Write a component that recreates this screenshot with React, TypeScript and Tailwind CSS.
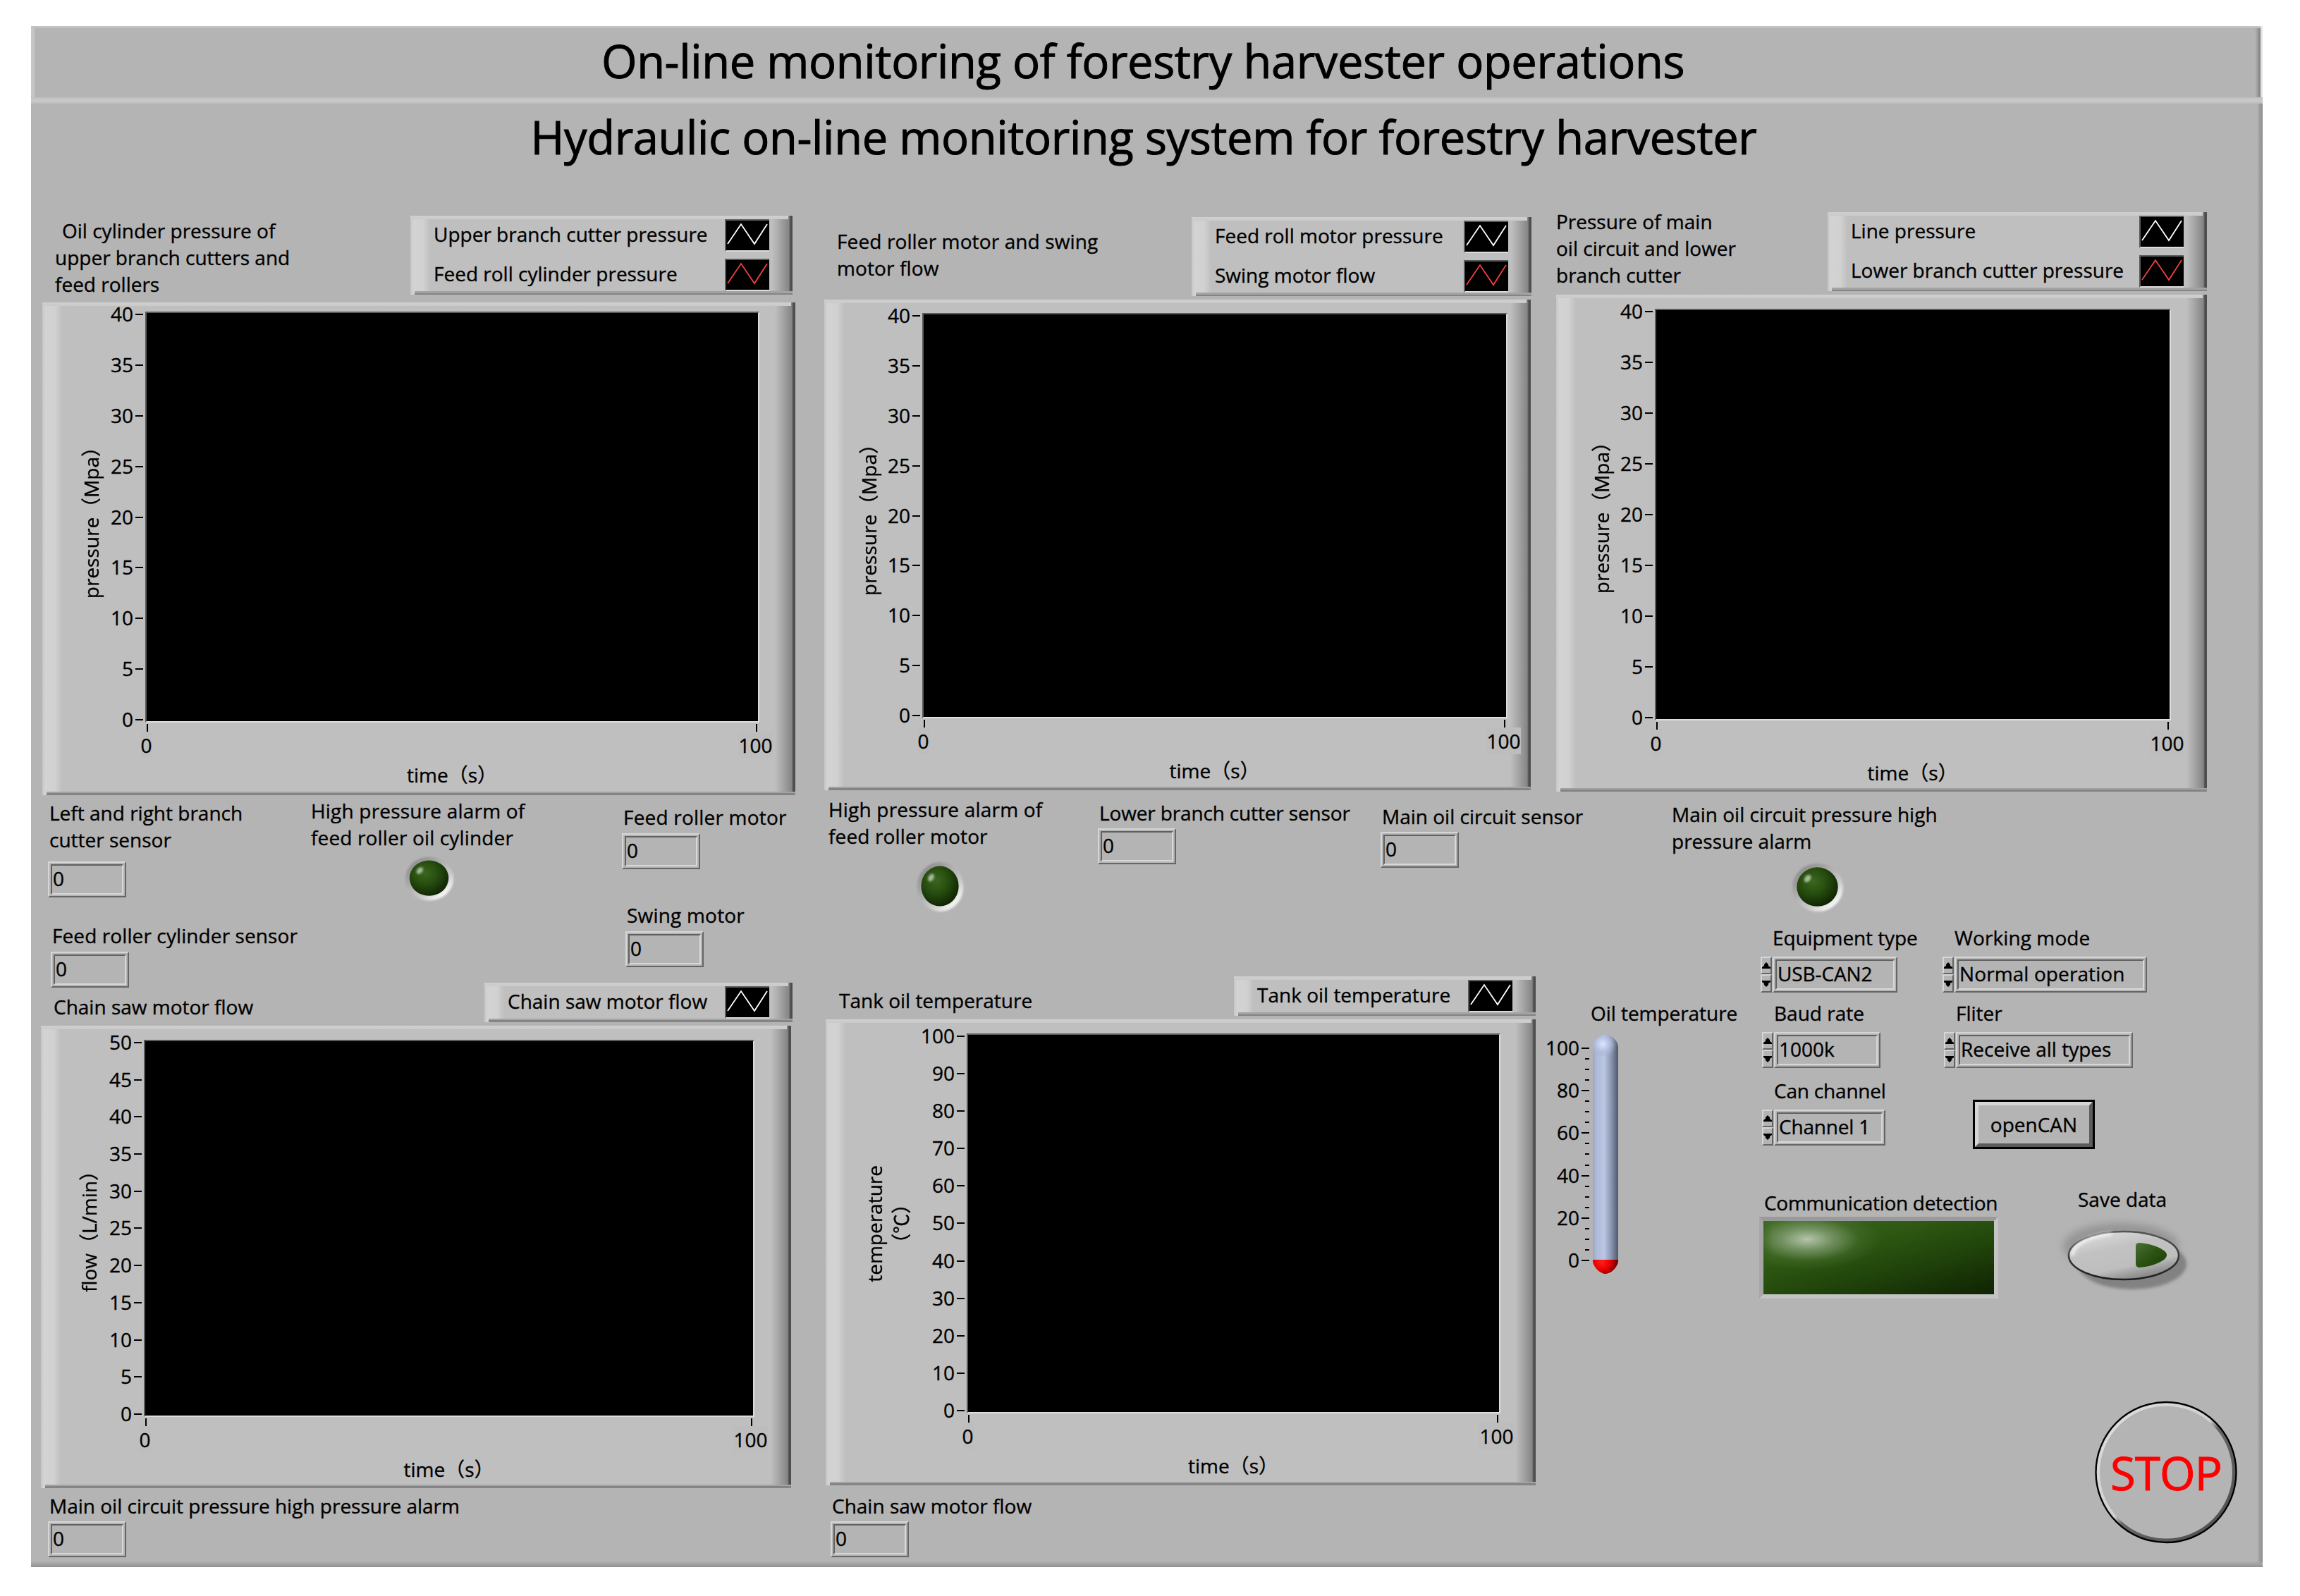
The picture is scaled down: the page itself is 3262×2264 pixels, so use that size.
import React from "react";

const BEVEL =
  "[background:linear-gradient(#d0d0d0,#cacaca)_0_0/calc(100%_-_6px)_5px_no-repeat,linear-gradient(#a3a3a3_50%,#848484_50%)_100%_100%/calc(100%_-_6px)_5px_no-repeat,linear-gradient(90deg,#c6c6c6_0px,#d3d3d3_4px,#d1d1d1_18px,#bfbfbf_28px,#bfbfbf_calc(100%_-_29px),#a6a6a6_calc(100%_-_18px),#858585_calc(100%_-_5px),#4e4e4e_calc(100%_-_3px),#4e4e4e_100%)]";

function Label({ children, className = "" }: { children: React.ReactNode; className?: string }) {
  return <div className={className}><span className="pl-[2px]">{children}</span></div>;
}

function Wave({ color }: { color: string }) {
  return (
    <div className="h-[46px] w-[63px] shrink-0 border-t-2 border-r-0 border-b-2 border-l-2 border-t-[#5a5a5a] border-b-[#dcdcdc] border-l-[#5a5a5a] bg-black">
      <svg width="61" height="42" viewBox="2 2 61 42" fill="none">
        <path d="M4 35 L23 7 L42 35 L60 7" stroke={color} strokeWidth="1.800" />
      </svg>
    </div>
  );
}

function Legend({ items, className }: { items: string[]; className: string }) {
  return (
    <div className={`${BEVEL} flex shrink-0 flex-col gap-[10px] pt-[5px] pr-[33px] pl-[33px] ${className}`}>
      {items.map((t, i) => (
        <div key={t} className="flex h-[46px] justify-between pt-0">
          <span className="pt-[2px]">{t}</span>
          <Wave color={i === 0 ? "#ffffff" : "#f04040"} />
        </div>
      ))}
    </div>
  );
}

type ChartProps = {
  frame: string;
  axis: string;
  label: string;
  plot: string;
  base: string;
  ticks: number[];
  lines: string[];
};

function Chart({ frame, axis, label, plot, base, ticks, lines }: ChartProps) {
  return (
    <div className={`${BEVEL} shrink-0 ${frame}`}>
      <div className="flex">
        <div className={`flex shrink-0 ${axis}`}>
          <div className={`flex shrink-0 items-center ${label}`}>
            <div className="rotate-180 text-center [text-orientation:sideways] [writing-mode:vertical-rl]">
              {lines.map((l) => (
                <div key={l}>{l}</div>
              ))}
            </div>
          </div>
          <div className="flex flex-1 flex-col justify-between pt-[3px] pr-[3px] pb-[3px]">
            {ticks.map((t) => (
              <div key={t} className="flex h-[2px] items-center justify-end gap-[3px]">
                <span className="pb-[2px]">{t}</span>
                <div className="h-[2px] w-[11px] shrink-0 bg-black" />
              </div>
            ))}
          </div>
        </div>
        <div
          className={`shrink-0 border-2 border-t-[#5a5a5a] border-r-[#dcdcdc] border-b-[#dedede] border-l-[#5a5a5a] bg-black ${plot}`}
        />
      </div>
      <div className={base}>
        <div className="flex justify-between pt-[2px]">
          {["0", "100"].map((t) => (
            <div key={t} className="flex w-[2px] flex-col items-center">
              <div className="h-[11px] w-[2px] shrink-0 bg-black" />
              <span className="-ml-[3px] bg-[#bdbdbd]">{t}</span>
            </div>
          ))}
        </div>
        <div className="mt-[4px] text-center">time（s）</div>
      </div>
    </div>
  );
}

function Sunken({ children, className }: { children: React.ReactNode; className: string }) {
  return (
    <div
      className={`h-[51px] border-2 border-t-[#d6d6d6] border-r-[#666] border-b-[#666] border-l-[#d6d6d6] p-[2px] ${className}`}
    >
      <div className="flex h-full items-center border-2 border-t-[#606060] border-r-[#d8d8d8] border-b-[#d8d8d8] border-l-[#606060] pb-[3px] pl-px">
        {children}
      </div>
    </div>
  );
}

function Spinner() {
  const key =
    "flex w-[16px] items-center justify-center border-2 border-t-[#d6d6d6] border-r-[#666] border-b-[#666] border-l-[#d6d6d6]";
  return (
    <div className="flex h-[51px] w-[16px] flex-col justify-between">
      <div className={`${key} h-[25px]`}>
        <svg width="12" height="10" viewBox="0 0 12 10" className="shrink-0">
          <path d="M6 0 L9 3 V5 L12 7 V9 H0 V7 L3 5 V3 Z" fill="#000" />
        </svg>
      </div>
      <div className={`${key} h-[26px]`}>
        <svg width="12" height="10" viewBox="0 0 12 10" className="shrink-0">
          <path d="M6 10 L9 7 V5 L12 3 V1 H0 V3 L3 5 V7 Z" fill="#000" />
        </svg>
      </div>
    </div>
  );
}

function Field({ label, value, width, className }: { label: string; value: string; width: string; className: string }) {
  return (
    <div className={className}>
      <div className="pl-[17px]">{label}</div>
      <div className="mt-[8px] flex gap-px">
        <Spinner />
        <Sunken className={width}>{value}</Sunken>
      </div>
    </div>
  );
}

function Led({ id, className }: { id: string; className: string }) {
  return (
    <svg viewBox="0 0 76 76" preserveAspectRatio="none" className={className}>
      <defs>
        <linearGradient id={`${id}r`} x1="0.15" y1="0.1" x2="0.85" y2="0.9">
          <stop offset="0" stopColor="#8c8c8c" />
          <stop offset="0.4" stopColor="#b0b0b0" />
          <stop offset="0.7" stopColor="#cccccc" />
          <stop offset="1" stopColor="#ffffff" />
        </linearGradient>
        <radialGradient id={`${id}b`} cx="0.4" cy="0.36" r="0.65">
          <stop offset="0" stopColor="#3a661f" />
          <stop offset="0.45" stopColor="#295010" />
          <stop offset="1" stopColor="#102603" />
        </radialGradient>
        <filter id={`${id}f`} x="-50%" y="-50%" width="200%" height="200%">
          <feGaussianBlur stdDeviation="1.6" />
        </filter>
      </defs>
      <circle cx="38" cy="38" r="35" fill={`url(#${id}r)`} filter={`url(#${id}f)`} />
      <circle cx="37.500" cy="37" r="28.500" fill={`url(#${id}b)`} />
      <ellipse cx="24" cy="25" rx="4" ry="6" fill="#cfdcc8" opacity="0.75" filter={`url(#${id}f)`} transform="rotate(35 24 25)" />
    </svg>
  );
}

function Thermometer() {
  const marks = Array.from({ length: 21 }, (_, i) => 100 - i * 5);
  return (
    <div className="mt-[12px] flex">
      <div className="mt-[18px] flex h-[303px] w-[64px] flex-col justify-between">
        {marks.map((m) => (
          <div key={m} className="flex h-[2px] items-center justify-end gap-[3px]">
            {m % 20 === 0 ? (
              <>
                <span className="pb-[2px]">{m}</span>
                <div className="h-[2px] w-[11px] shrink-0 bg-black" />
              </>
            ) : (
              <div className="h-[2px] w-[6px] shrink-0 bg-black" />
            )}
          </div>
        ))}
      </div>
      <svg width="36" height="339" viewBox="0 0 36 339" className="ml-[5px]">
        <defs>
          <linearGradient id="tube" x1="0" x2="1" y1="0" y2="0">
            <stop offset="0" stopColor="#9aa6c2" />
            <stop offset="0.15" stopColor="#aebbdb" />
            <stop offset="0.45" stopColor="#bac6e2" />
            <stop offset="0.7" stopColor="#8f9ab5" />
            <stop offset="1" stopColor="#4f586c" />
          </linearGradient>
          <radialGradient id="cap" gradientUnits="userSpaceOnUse" cx="14" cy="13" r="20">
            <stop offset="0" stopColor="#dce6ff" />
            <stop offset="0.5" stopColor="#b4c1e2" stopOpacity="0.9" />
            <stop offset="1" stopColor="#a0acc8" stopOpacity="0" />
          </radialGradient>
          <radialGradient id="bulb" gradientUnits="userSpaceOnUse" cx="13" cy="322" r="24">
            <stop offset="0" stopColor="#ff2020" />
            <stop offset="0.45" stopColor="#ee0000" />
            <stop offset="1" stopColor="#5a0000" />
          </radialGradient>
        </defs>
        <path d="M0 18 C0 8 10 0 18 0 C26 0 36 8 36 18 V319 H0 Z" fill="url(#tube)" />
        <path d="M0 18 C0 8 10 0 18 0 C26 0 36 8 36 18 V30 H0 Z" fill="url(#cap)" />
        <path d="M0 319 H36 V322 C34 331 25 339 18 339 C11 339 2 331 0 322 Z" fill="url(#bulb)" />
      </svg>
    </div>
  );
}

function SaveButton() {
  return (
    <svg width="210" height="120" viewBox="2905 1720 210 120" className="mt-0">
      <defs>
        <filter id="soft" x="-30%" y="-30%" width="160%" height="160%">
          <feGaussianBlur stdDeviation="6" />
        </filter>
        <filter id="soft2" x="-30%" y="-30%" width="160%" height="160%">
          <feGaussianBlur stdDeviation="2" />
        </filter>
        <linearGradient id="face" x1="0.1" y1="0" x2="0.6" y2="1">
          <stop offset="0" stopColor="#e0e0e0" />
          <stop offset="0.4" stopColor="#c2c2c2" />
          <stop offset="0.75" stopColor="#bebebe" />
          <stop offset="1" stopColor="#858585" />
        </linearGradient>
        <linearGradient id="rim" x1="0" y1="0" x2="0" y2="1">
          <stop offset="0" stopColor="#555" />
          <stop offset="1" stopColor="#1c1c1c" />
        </linearGradient>
        <linearGradient id="dee" x1="0" y1="0" x2="1" y2="1">
          <stop offset="0" stopColor="#4a7034" />
          <stop offset="0.5" stopColor="#2c5312" />
          <stop offset="1" stopColor="#1a3a06" />
        </linearGradient>
      </defs>
      <ellipse cx="3008" cy="1768" rx="82" ry="33" fill="#949494" filter="url(#soft)" />
      <ellipse cx="3024" cy="1793" rx="77" ry="36" fill="#828282" filter="url(#soft2)" />
      <ellipse cx="3012" cy="1781" rx="78" ry="34" fill="url(#face)" stroke="url(#rim)" strokeWidth="2.500" />
      <path d="M2939 1781 C2940 1764 2965 1753 2995 1750" stroke="#fff" strokeWidth="5" fill="none" opacity="0.7" filter="url(#soft2)" />
      <path d="M3029 1767 Q3029 1763 3035 1763 Q3056 1765 3069 1774 Q3077 1780 3069 1787 Q3056 1796 3035 1798 Q3029 1798 3029 1793 Z" fill="url(#dee)" />
    </svg>
  );
}

function StopButton() {
  return (
    <div className="mt-[147px] ml-[476px] grid h-[203px] w-[202px] place-items-center *:[grid-area:1/1]">
      <svg width="202" height="203" viewBox="0 0 202 203" fill="none">
        <defs>
          <linearGradient id="bevel" x1="0.15" y1="0.15" x2="0.85" y2="0.85">
            <stop offset="0" stopColor="#dadada" />
            <stop offset="0.46" stopColor="#cfcfcf" />
            <stop offset="0.54" stopColor="#666666" />
            <stop offset="1" stopColor="#545454" />
          </linearGradient>
        </defs>
        <circle cx="101" cy="101.500" r="96.500" stroke="url(#bevel)" strokeWidth="5" />
        <circle cx="101" cy="101.500" r="99.500" stroke="#000" strokeWidth="2.400" />
      </svg>
      <span className="text-[65px] leading-[88px] tracking-[-0.8px] text-[#ff0000] [-webkit-text-stroke:1px_#ff0000]">STOP</span>
    </div>
  );
}

const T40 = [40, 35, 30, 25, 20, 15, 10, 5, 0];
const T50 = [50, 45, 40, 35, 30, 25, 20, 15, 10, 5, 0];
const T100 = [100, 90, 80, 70, 60, 50, 40, 30, 20, 10, 0];

export default function App() {
  return (
    <div className="h-[2264px] w-[3262px] overflow-hidden bg-white pt-[37px] pl-[44px] text-[28px] leading-[38px] whitespace-nowrap text-black [-webkit-text-stroke:0.35px_#000] [font-family:'Open_Sans','Noto_Sans_CJK_SC',sans-serif]">
      <header className="flex h-[101px] w-[3165px]">
        <div className="h-full w-[3162px] border-t-[3px] border-t-[#c2c2c2] [background:linear-gradient(90deg,#c6c6c6_0px,#c6c6c6_4px,#b4b4b4_6px,#b4b4b4_calc(100%_-_8px),#9c9c9c_calc(100%_-_4px),#7c7c7c_100%)]">
          <h1 className="pt-[2px] pr-[8px] text-center text-[65px] leading-[88px] tracking-[-0.38px] [-webkit-text-stroke:1px_#000]">
            On-line monitoring of forestry harvester operations
          </h1>
        </div>
        <div className="h-full w-[3px] bg-[#e4e4e4]" />
      </header>
      <div className="h-[9px] w-[3165px] [background:linear-gradient(#bdbdbd,#c9c9c9_40%,#c6c6c6_70%,#bbbbbb)]" />
      <main className="h-[2076px] w-[3165px] [background:linear-gradient(transparent_calc(100%_-_9px),#a6a6a6_calc(100%_-_5px),#909090_100%),linear-gradient(90deg,#b4b4b4_calc(100%_-_8px),#a2a2a2_calc(100%_-_5px),#8a8a8a_100%)]">
        <h2 className="h-[143px] pt-[3px] pr-[9px] text-center text-[65px] leading-[88px] tracking-[-0.38px] [-webkit-text-stroke:1px_#000]">
          Hydraulic on-line monitoring system for forestry harvester
        </h2>
        <div className="flex">
          {/* Cylinder pressure and chain saw flow */}
          <section className="flex w-[1106px] shrink-0 flex-col items-start">
            <div className="flex h-[139px]">
              <div className="mt-[18px] ml-[34px] w-[504px]">
                <div className="pl-[10px]">Oil cylinder pressure of</div>
                <div>upper branch cutters and</div>
                <div>feed rollers</div>
              </div>
              <Legend className="mt-[16px] h-[112px] w-[542px]" items={["Upper branch cutter pressure", "Feed roll cylinder pressure"]} />
            </div>
            <Chart
              frame="ml-[16px] h-[699px] w-[1068px] pt-[13px]"
              axis="w-[146px]"
              label="ml-[50px] w-[38px] pt-[2px]"
              plot="h-[583px] w-[871px]"
              base="ml-[148px] w-[866px]"
              ticks={T40}
              lines={["pressure（Mpa）"]}
            />
            <div className="flex h-[327px]">
              <div className="mt-[6px] ml-[24px] w-[371px]">
                <Label>Left and right branch</Label>
                <Label>cutter sensor</Label>
                <Sunken className="mt-[12px] w-[111px]">0</Sunken>
                <Label className="mt-[35px] ml-[4px] tracking-[0.1px]">Feed roller cylinder sensor</Label>
                <Sunken className="mt-[4px] ml-[4px] w-[111px]">0</Sunken>
                <Label className="mt-[8px] ml-[6px]">Chain saw motor flow</Label>
              </div>
              <div>
                <div className="flex h-[266px]">
                  <div className="mt-[3px] w-[443px]">
                    <Label className="tracking-[0.2px]">High pressure alarm of</Label>
                    <Label className="tracking-[0.15px]">feed roller oil cylinder</Label>
                    <Led id="a" className="mt-[6px] ml-[133px] h-[67px] w-[74px]" />
                  </div>
                  <div className="mt-[12px]">
                    <Label className="tracking-[0.2px]">Feed roller motor</Label>
                    <Sunken className="mt-[4px] w-[111px]">0</Sunken>
                    <Label className="mt-[46px] ml-[5px] tracking-[0.2px]">Swing motor</Label>
                    <Sunken className="mt-[4px] ml-[5px] w-[111px]">0</Sunken>
                  </div>
                </div>
                <Legend className="ml-[248px] h-[56px] w-[437px]" items={["Chain saw motor flow"]} />
              </div>
            </div>
            <Chart
              frame="ml-[14px] h-[656px] w-[1064px] pt-[20px]"
              axis="w-[146px]"
              label="ml-[49px] w-[38px] pb-[4px]"
              plot="h-[535px] w-[866px]"
              base="ml-[148px] w-[861px]"
              ticks={T50}
              lines={["flow（L/min）"]}
            />
            <div className="mt-[6px] ml-[24px]">
              <Label>Main oil circuit pressure high pressure alarm</Label>
              <Sunken className="mt-[3px] w-[111px]">0</Sunken>
            </div>
          </section>

          {/* Motor pressure and tank temperature */}
          <section className="flex w-[1040px] shrink-0 flex-col items-start">
            <div className="flex h-[135px]">
              <div className="mt-[33px] ml-[37px] w-[503px] tracking-[0.12px]">
                <div>Feed roller motor and swing</div>
                <div>motor flow</div>
              </div>
              <Legend className="mt-[18px] h-[112px] w-[482px]" items={["Feed roll motor pressure", "Swing motor flow"]} />
            </div>
            <Chart
              frame="ml-[19px] h-[696px] w-[1002px] pt-[19px]"
              axis="w-[139px]"
              label="ml-[44px] w-[38px] pb-[2px]"
              plot="h-[575px] w-[830px]"
              base="ml-[141px] w-[825px]"
              ticks={T40}
              lines={["pressure（Mpa）"]}
            />
            <div className="flex h-[264px]">
              <div className="mt-[8px] ml-[23px] w-[384px]">
                <Label className="tracking-[0.2px]">High pressure alarm of</Label>
                <Label className="tracking-[0.15px]">feed roller motor</Label>
                <Led id="b" className="mt-[15px] ml-[125px] h-[76px] w-[71px]" />
              </div>
              <div className="mt-[13px] w-[401px]">
                <Label className="tracking-[-0.15px]">Lower branch cutter sensor</Label>
                <Sunken className="mt-[3px] w-[111px]">0</Sunken>
              </div>
              <div className="mt-[18px] w-[200px]">
                <Label>Main oil circuit sensor</Label>
                <Sunken className="mt-[3px] w-[111px]">0</Sunken>
              </div>
            </div>
            <div className="flex h-[61px]">
              <div className="mt-[15px] ml-[40px] w-[560px]">Tank oil temperature</div>
              <Legend className="h-[56px] w-[428px]" items={["Tank oil temperature"]} />
            </div>
            <Chart
              frame="ml-[21px] h-[661px] w-[1007px] pt-[20px]"
              axis="w-[200px]"
              label="ml-[50px] w-[76px]"
              plot="h-[539px] w-[757px]"
              base="ml-[202px] w-[752px]"
              ticks={T100}
              lines={["temperature", "（℃）"]}
            />
            <div className="mt-[10px] ml-[28px]">
              <Label>Chain saw motor flow</Label>
              <Sunken className="mt-[3px] w-[111px]">0</Sunken>
            </div>
          </section>

          {/* Main circuit pressure and CAN controls */}
          <section className="flex w-[1013px] shrink-0 flex-col items-start">
            <div className="flex h-[128px]">
              <div className="mt-[5px] ml-[17px] w-[385px]">
                <div>Pressure of main</div>
                <div>oil circuit and lower</div>
                <div>branch cutter</div>
              </div>
              <Legend className="mt-[11px] h-[112px] w-[538px]" items={["Line pressure", "Lower branch cutter pressure"]} />
            </div>
            <Chart
              frame="ml-[17px] h-[705px] w-[923px] pt-[20px]"
              axis="w-[140px]"
              label="ml-[45px] w-[38px] pb-[4px]"
              plot="h-[584px] w-[732px]"
              base="ml-[142px] w-[727px]"
              ticks={T40}
              lines={["pressure（Mpa）"]}
            />
            <div className="h-[180px] pt-[13px] pl-[179px]">
              <Label>Main oil circuit pressure high</Label>
              <Label>pressure alarm</Label>
              <Led id="c" className="mt-[10px] ml-[170px] h-[74px] w-[78px]" />
            </div>
            <div className="flex">
              <div className="w-[305px] pt-[115px]">
                <div className="pl-[66px] tracking-[-0.05px]">Oil temperature</div>
                <Thermometer />
              </div>
              <div>
                <div className="flex h-[377px] pt-[8px] pl-[2px]">
                  <div className="w-[258px]">
                    <Field className="tracking-[-0.1px]" label="Equipment type" value="USB-CAN2" width="w-[177px]" />
                    <Field className="mt-[10px] ml-[2px]" label="Baud rate" value="1000k" width="w-[151px]" />
                    <Field className="mt-[13px] ml-[2px] tracking-[-0.2px]" label="Can channel" value="Channel 1" width="w-[158px]" />
                  </div>
                  <div>
                    <Field className="tracking-[0.1px]" label="Working mode" value="Normal operation" width="w-[273px]" />
                    <Field className="mt-[10px] ml-[2px]" label="Fliter" value="Receive all types" width="w-[251px]" />
                    <div className="mt-[45px] ml-[43px] h-[70px] w-[173px] border-[3px] border-black">
                      <div className="flex h-full items-center justify-center border-[5px] border-t-[#d6d6d6] border-r-[#5c5c5c] border-b-[#5c5c5c] border-l-[#d6d6d6]">
                        openCAN
                      </div>
                    </div>
                  </div>
                </div>
                <div className="flex h-[160px]">
                  <div className="pt-[7px]">
                    <div className="pl-[7px] tracking-[-0.3px]">Communication detection</div>
                    <div className="mt-px h-[116px] w-[339px] border-[6px] border-t-[#9a9a9a] border-r-[#c4c4c4] border-b-[#c4c4c4] border-l-[#a6a6a6] [background:linear-gradient(90deg,#2d57144d_0%,transparent_4%),radial-gradient(ellipse_32%_42%_at_19%_25%,#b4c4ac_0%,#8ca57db3_35%,#52783a59_70%,#3f6a2400_100%),linear-gradient(165deg,#3d6b22_0%,#2d5712_35%,#21450b_60%,#0f2303_100%)_padding-box]" />
                  </div>
                  <div className="ml-[71px] pt-[2px]">
                    <div className="pl-[42px]">Save data</div>
                    <SaveButton />
                  </div>
                </div>
                <StopButton />
              </div>
            </div>
          </section>
        </div>
      </main>
    </div>
  );
}
